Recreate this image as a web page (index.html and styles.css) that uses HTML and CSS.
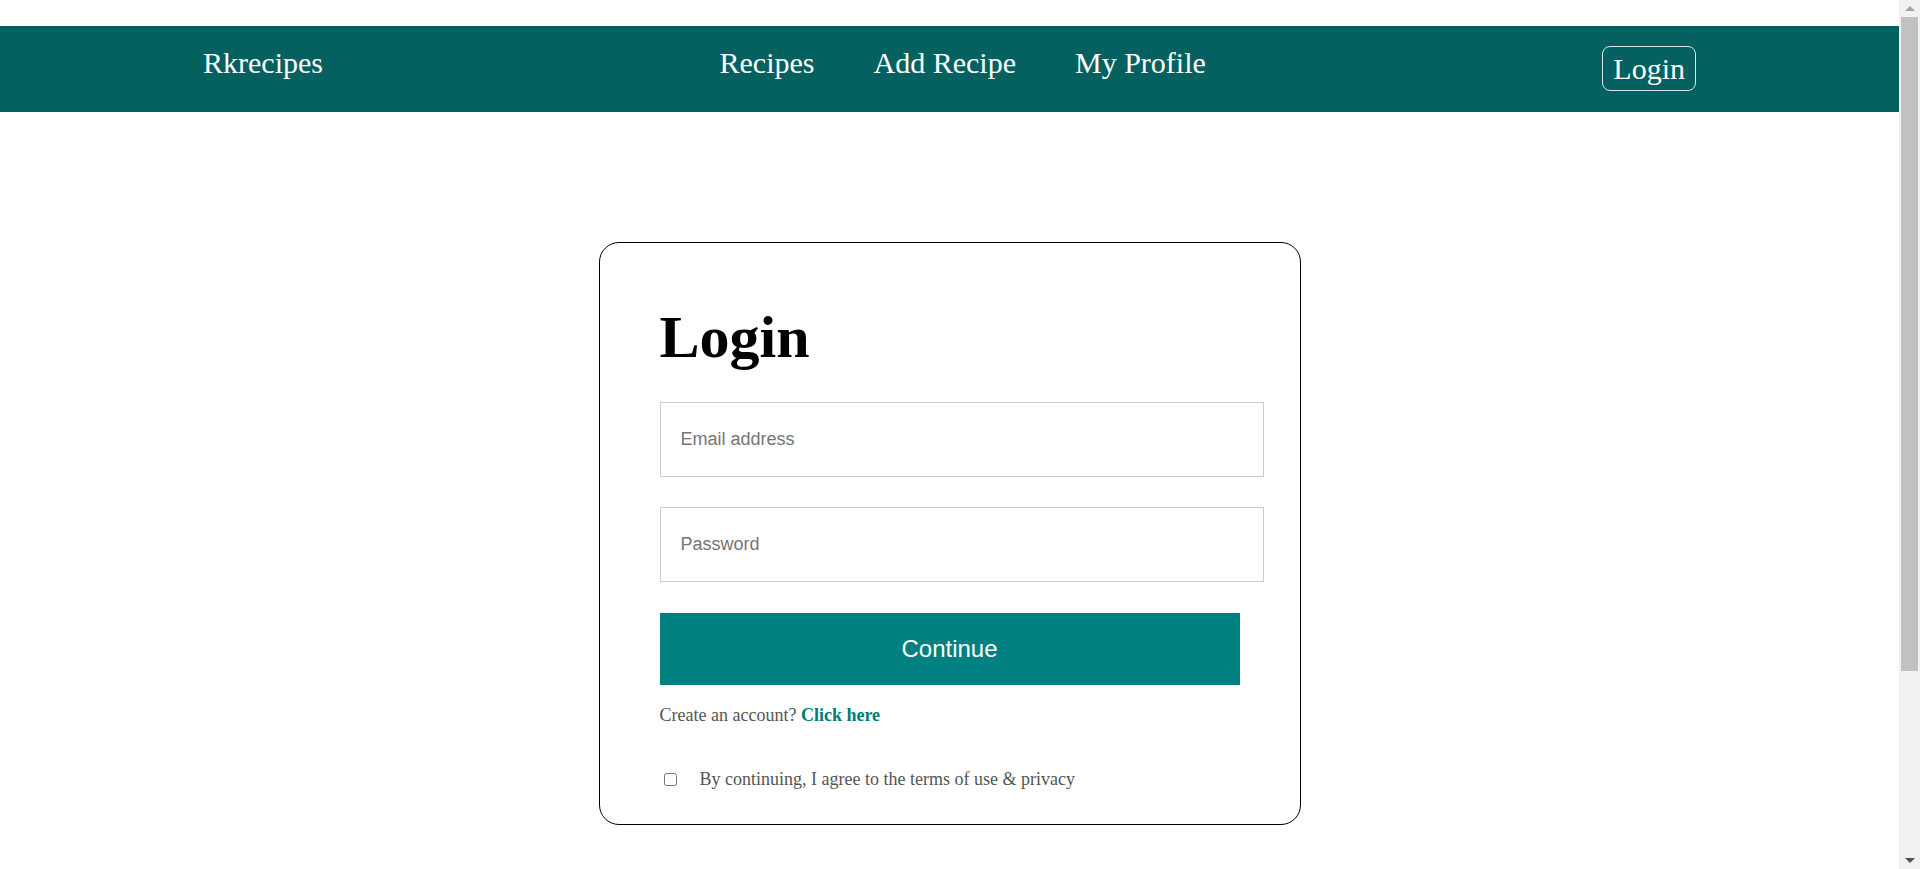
FILE: index.html
```html
<!DOCTYPE html>
<html lang="en">
<head>
<meta charset="utf-8">
<title>Rkrecipes - Login</title>
<link rel="stylesheet" href="styles.css">
</head>
<body>
<div class="page">
  <header class="topbar">
    <nav class="nav">
      <a class="brand" href="#">Rkrecipes</a>
      <ul class="links">
        <li><a href="#">Recipes</a></li>
        <li><a href="#">Add Recipe</a></li>
        <li><a href="#">My Profile</a></li>
      </ul>
      <button class="login-btn" type="button">Login</button>
    </nav>
  </header>

  <main class="main">
    <section class="card">
      <h1 class="title">Login</h1>
      <form class="form">
        <input class="field" type="email" placeholder="Email address">
        <input class="field field-gap" type="password" placeholder="Password">
        <button class="continue" type="button">Continue</button>
        <p class="create">Create an account? <a class="create-link" href="#">Click here</a></p>
        <label class="agree"><input class="check" type="checkbox"><span class="agree-text">By continuing, I agree to the terms of use &amp; privacy</span></label>
      </form>
    </section>
  </main>
</div>

<div class="scrollbar" aria-hidden="true">
  <div class="sb-arrow sb-up"></div>
  <div class="sb-track"><div class="sb-thumb"></div></div>
  <div class="sb-arrow sb-down"></div>
</div>
</body>
</html>
```

FILE: styles.css
```css
* { box-sizing: border-box; }

html, body {
  margin: 0;
  padding: 0;
  background: #ffffff;
}

body {
  font-family: "Liberation Serif", "Times New Roman", serif;
  color: #000;
}

.page {
  width: calc(100% - 21px);
  padding-top: 26px;
}

.topbar {
  background: #056160;
  padding: 20px 0 21px;
}

.nav {
  width: 1493px;
  margin: 0 auto;
  display: flex;
  justify-content: space-between;
  align-items: flex-start;
}

.brand,
.links a {
  display: block;
  color: #ffffff;
  text-decoration: none;
  font-size: 30px;
  line-height: 33px;
}

.links {
  list-style: none;
  margin: 0;
  padding: 0;
  display: flex;
  gap: 59px;
}

.login-btn {
  font-family: "Liberation Serif", "Times New Roman", serif;
  font-size: 30px;
  line-height: 35px;
  height: 45px;
  color: #ffffff;
  background: transparent;
  border: 1px solid #d9e6e6;
  border-radius: 8px;
  padding: 4px 10px 4px;
  cursor: pointer;
}

.main {
  padding: 130px 0 286px;
  display: flex;
  justify-content: center;
}

.card {
  width: 702px;
  border: 1px solid #000;
  border-radius: 20px;
  padding: 60px 60px 34px;
}

.title {
  margin: 0 0 31px;
  font-size: 60px;
  line-height: 68px;
  font-weight: bold;
}

.form {
  display: flex;
  flex-direction: column;
  align-items: flex-start;
}

.field {
  width: 604px;
  height: 75px;
  border: 1px solid #cccccc;
  border-radius: 0;
  padding: 0 20px;
  font-family: "Liberation Sans", Arial, sans-serif;
  font-size: 18px;
  color: #333;
  outline: none;
}

.field::placeholder {
  color: #757575;
}

.field-gap {
  margin-top: 30px;
}

.continue {
  margin-top: 31px;
  width: 580px;
  height: 72px;
  border: none;
  background: #008080;
  color: #ffffff;
  font-family: "Liberation Sans", Arial, sans-serif;
  font-size: 24px;
  cursor: pointer;
}

.create {
  margin: 20px 0 0;
  font-size: 18px;
  line-height: normal;
  color: #555555;
}

.create-link {
  color: #007a7a;
  font-weight: bold;
  text-decoration: none;
}

.agree {
  margin-top: 43px;
  display: flex;
  align-items: center;
}

.check {
  margin: 0 0 0 4px;
  width: 13px;
  height: 13px;
}

.agree-text {
  margin-left: 23px;
  font-size: 18px;
  line-height: normal;
  color: #555555;
}

/* imitation of the browser's vertical scrollbar */
.scrollbar {
  position: fixed;
  top: 0;
  right: 0;
  bottom: 0;
  width: 21px;
  background: #f1f1f1;
  display: flex;
  flex-direction: column;
}

.sb-arrow {
  height: 17px;
  display: flex;
  align-items: center;
  justify-content: center;
}

.sb-up::before {
  content: "";
  border-left: 5px solid transparent;
  border-right: 5px solid transparent;
  border-bottom: 5px solid #a3a3a3;
}

.sb-down::before {
  content: "";
  border-left: 5px solid transparent;
  border-right: 5px solid transparent;
  border-top: 5px solid #505050;
}

.sb-track {
  flex: 1;
  padding: 0 2px;
}

.sb-thumb {
  height: 654px;
  background: #c1c1c1;
}
```
